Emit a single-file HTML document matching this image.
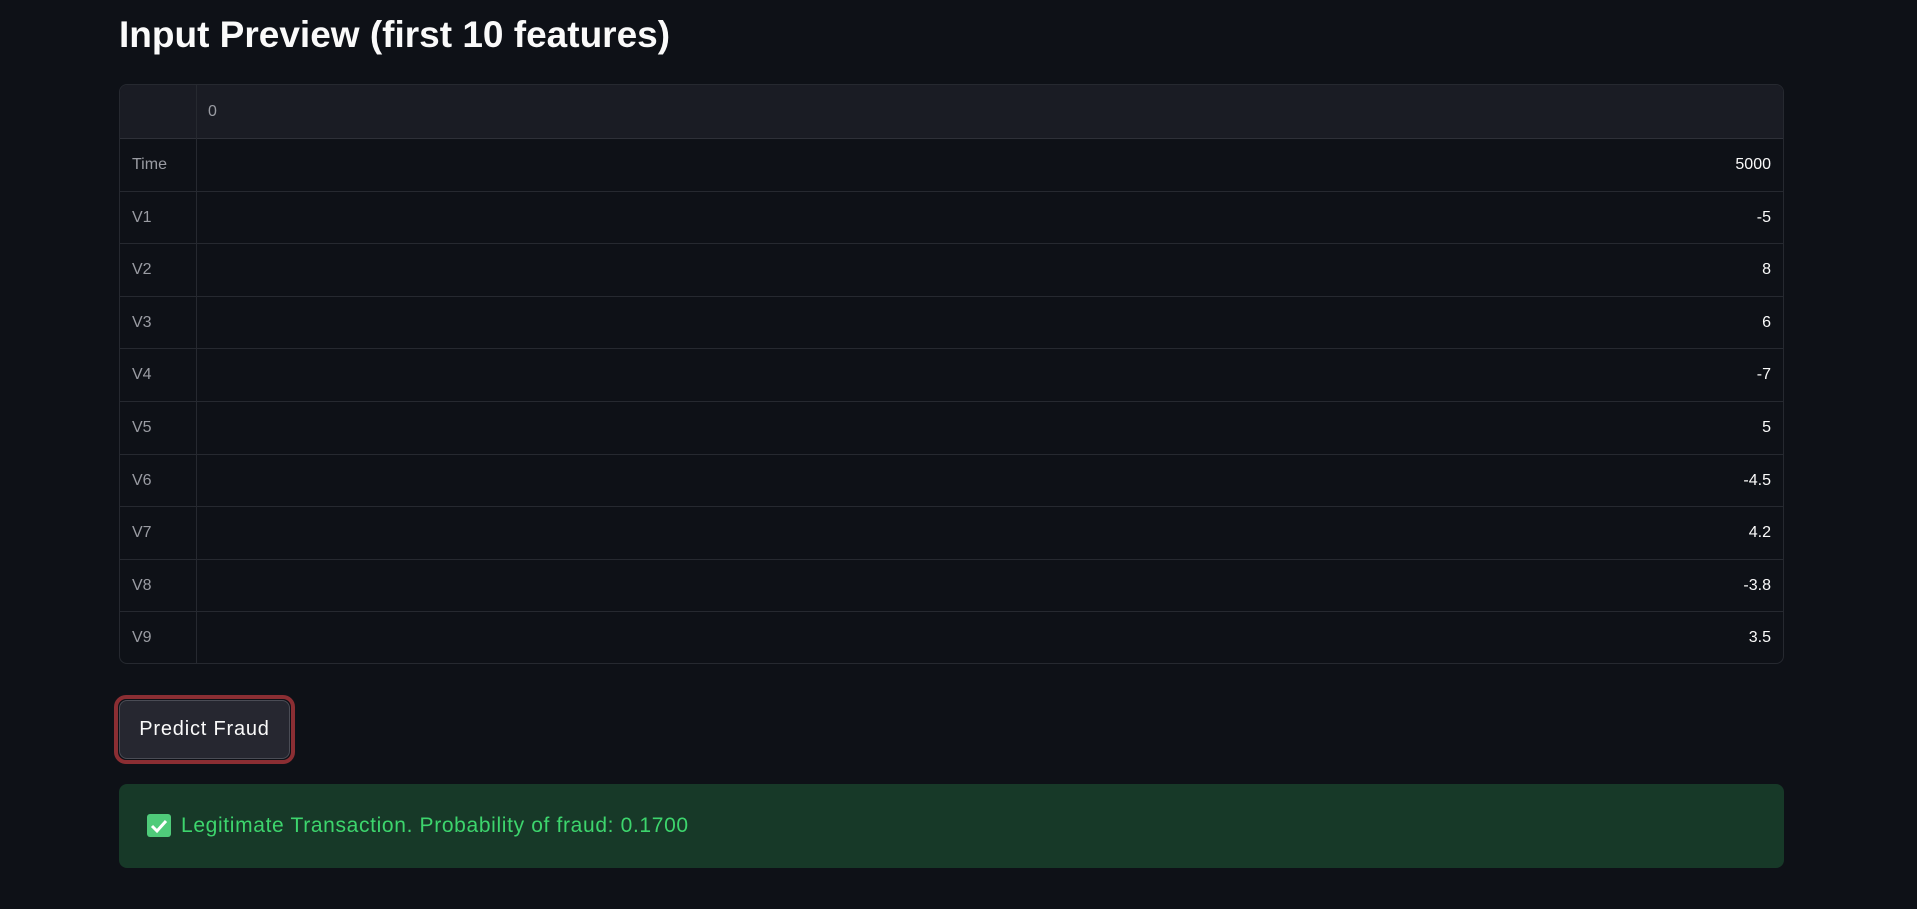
<!DOCTYPE html>
<html><head><meta charset="utf-8"><style>
html,body{margin:0;padding:0;background:#0e1117;width:1917px;height:909px;overflow:hidden;font-family:"Liberation Sans",sans-serif;}
h1{position:absolute;left:119px;top:9px;margin:0;font-size:37px;font-weight:bold;color:#fafafa;letter-spacing:0px;line-height:52px;}
.tbl{position:absolute;left:119px;top:84px;width:1665px;height:580px;border:1px solid #262930;border-radius:8px;overflow:hidden;box-sizing:border-box;}
.row{position:absolute;left:0;right:0;height:52.6px;border-bottom:1px solid #262930;box-sizing:border-box;font-size:16px;}
.row .h{position:absolute;left:12px;top:0;line-height:52px;color:#9a9ca3;}
.row .v{position:absolute;right:12px;top:0;line-height:52px;color:#fafafa;}
.hd{position:absolute;left:0;right:0;top:0;height:54px;background:#1a1c24;border-bottom:1px solid #2e3038;box-sizing:border-box;}
.hd span{position:absolute;left:88px;line-height:54px;color:#9a9ca3;font-size:16px;}
.vline{position:absolute;left:76px;top:0;bottom:0;width:1px;background:#262930;}
.btn{position:absolute;left:114px;top:695px;width:181px;height:69px;border:4px solid #8b2e33;border-radius:12px;box-sizing:border-box;background:#0e1117;}
.btn div{position:absolute;left:1px;top:1px;right:1px;bottom:1px;background:#262730;border:1px solid #4a4c55;border-radius:8px;color:#fafafa;font-size:20px;text-align:center;line-height:57px;letter-spacing:0.8px;}
.alert{position:absolute;left:119px;top:784px;width:1665px;height:84px;background:#173928;border-radius:8px;}
.chk{position:absolute;left:28px;top:30px;width:24px;height:23px;background:#4fcb7a;border-radius:3px;}
.alert .t{position:absolute;left:62px;top:0;line-height:84px;color:#3dd56d;font-size:21px;letter-spacing:0.65px;}
</style></head><body>
<h1>Input Preview (first 10 features)</h1>
<div class="tbl">
<div class="hd"><span>0</span></div>
<div class="row" style="top:54px"><span class="h">Time</span><span class="v">5000</span></div>
<div class="row" style="top:106.6px"><span class="h">V1</span><span class="v">-5</span></div>
<div class="row" style="top:159.2px"><span class="h">V2</span><span class="v">8</span></div>
<div class="row" style="top:211.8px"><span class="h">V3</span><span class="v">6</span></div>
<div class="row" style="top:264.4px"><span class="h">V4</span><span class="v">-7</span></div>
<div class="row" style="top:317px"><span class="h">V5</span><span class="v">5</span></div>
<div class="row" style="top:369.6px"><span class="h">V6</span><span class="v">-4.5</span></div>
<div class="row" style="top:422.2px"><span class="h">V7</span><span class="v">4.2</span></div>
<div class="row" style="top:474.8px"><span class="h">V8</span><span class="v">-3.8</span></div>
<div class="row" style="top:527.4px;border-bottom:none"><span class="h">V9</span><span class="v">3.5</span></div>
<div class="vline"></div>
</div>
<div class="btn"><div>Predict Fraud</div></div>
<div class="alert"><div class="chk"><svg width="24" height="23" viewBox="0 0 24 23"><path d="M5 12l5 5 9-10" stroke="#fff" stroke-width="3" fill="none"/></svg></div><span class="t">Legitimate Transaction. Probability of fraud: 0.1700</span></div>
</body></html>
